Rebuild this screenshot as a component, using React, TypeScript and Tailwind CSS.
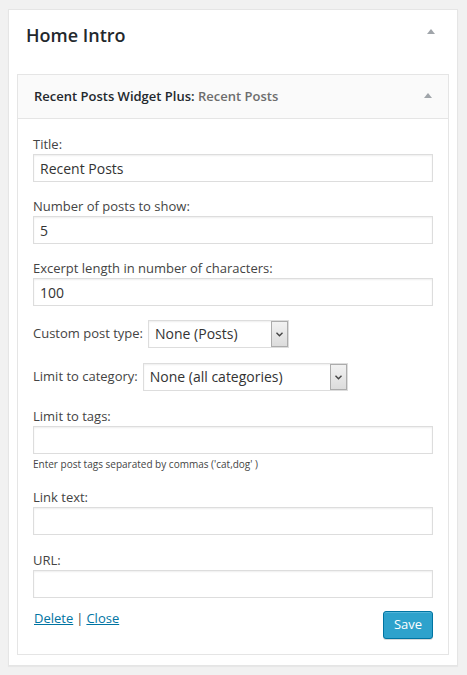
import React from 'react';

const font = { fontFamily: '"Open Sans", "Liberation Sans", sans-serif' };

const Caret: React.FC<{ className?: string }> = ({ className = '' }) => (
  <svg width="8" height="5" viewBox="0 0 8 5" className={className}>
    <path d="M0 5 L4 0 L8 5 Z" fill="#a0a5aa" />
  </svg>
);

const Label: React.FC<{ children: React.ReactNode }> = ({ children }) => (
  <label className="block text-[13px] leading-[18px] text-[#444] mb-[1px]">{children}</label>
);

const TextInput: React.FC<{ value?: string }> = ({ value = '' }) => (
  <input
    type="text"
    defaultValue={value}
    className="block w-[400px] h-[28px] border border-[#ddd] bg-white px-[6px] text-[14px] text-[#333] shadow-[inset_0_1px_2px_rgba(0,0,0,0.07)] outline-none"
    style={font}
  />
);

const Select: React.FC<{ value: string; width: string }> = ({ value, width }) => (
  <div
    className={`relative flex items-center h-[28px] border border-[#ddd] bg-white shadow-[inset_0_1px_2px_rgba(0,0,0,0.07)] ${width}`}
  >
    <span className="pl-[6px] text-[14px] text-[#333] leading-none">{value}</span>
    <div className="absolute right-0 top-0 bottom-0 w-[17px] border border-[#acacac] bg-gradient-to-b from-[#f2f2f2] to-[#dcdcdc] flex items-center justify-center">
      <svg width="7" height="5" viewBox="0 0 7 5">
        <path d="M0.5 0.8 L3.5 3.8 L6.5 0.8" stroke="#444" strokeWidth="1.4" fill="none" />
      </svg>
    </div>
  </div>
);

export default function App() {
  return (
    <div className="min-h-[675px] bg-[#f1f1f1] pt-[9px] pl-[8px]" style={font}>
      <div className="w-[450px] border border-[#e5e5e5] bg-white shadow-[0_1px_1px_rgba(0,0,0,0.04)] px-[8px] pb-[10px]">
        {/* sidebar heading */}
        <div className="flex items-start justify-between pt-[13px] pl-[9px] pr-[14px] mb-[27px]">
          <h3 className="text-[18px] leading-[24px] font-semibold text-[#23282d]">Home Intro</h3>
          <Caret className="mt-[6px]" />
        </div>

        {/* widget */}
        <div className="border border-[#e5e5e5]">
          <div className="flex items-start justify-between bg-[#fafafa] border-b border-[#e5e5e5] pt-[12px] pb-[13px] pl-[16px] pr-[16px]">
            <h4 className="text-[13px] leading-[18px] font-semibold text-[#23282d]">
              Recent Posts Widget Plus: <span className="text-[#6d6d6d]">Recent Posts</span>
            </h4>
            <Caret className="mt-[6px]" />
          </div>

          <div className="px-[15px] pt-[16px] pb-[15px]">
            <div>
              <Label>Title:</Label>
              <TextInput value="Recent Posts" />
            </div>
            <div className="mt-[15px]">
              <Label>Number of posts to show:</Label>
              <TextInput value="5" />
            </div>
            <div className="mt-[15px]">
              <Label>Excerpt length in number of characters:</Label>
              <TextInput value="100" />
            </div>
            <div className="mt-[14px] flex items-center gap-[5px]">
              <span className="text-[13px] text-[#444]">Custom post type:</span>
              <Select value="None (Posts)" width="w-[141px]" />
            </div>
            <div className="mt-[15px] flex items-center gap-[5px]">
              <span className="text-[13px] text-[#444]">Limit to category:</span>
              <Select value="None (all categories)" width="w-[205px]" />
            </div>
            <div className="mt-[16px]">
              <Label>Limit to tags:</Label>
              <TextInput />
              <p className="mt-[4px] text-[10px] leading-[13px] text-[#444]">
                Enter post tags separated by commas ('cat,dog' )
              </p>
            </div>
            <div className="mt-[17px]">
              <Label>Link text:</Label>
              <TextInput />
            </div>
            <div className="mt-[16px]">
              <Label>URL:</Label>
              <TextInput />
            </div>

            <div className="mt-[13px] flex items-start justify-between">
              <div className="text-[13px] leading-[18px] text-[#444] mt-[-2px] pl-[1px]">
                <a href="#" className="text-[#0074a2] underline">Delete</a>
                <span className="mx-[3px]">|</span>
                <a href="#" className="text-[#0074a2] underline">Close</a>
              </div>
              <button
                className="h-[28px] w-[50px] rounded-[3px] border border-[#0074a2] bg-[#2ea2cc] text-[13px] text-white shadow-[inset_0_1px_0_rgba(120,200,230,0.5),0_1px_0_rgba(0,0,0,0.15)]"
                style={font}
              >
                Save
              </button>
            </div>
          </div>
        </div>
      </div>
    </div>
  );
}
